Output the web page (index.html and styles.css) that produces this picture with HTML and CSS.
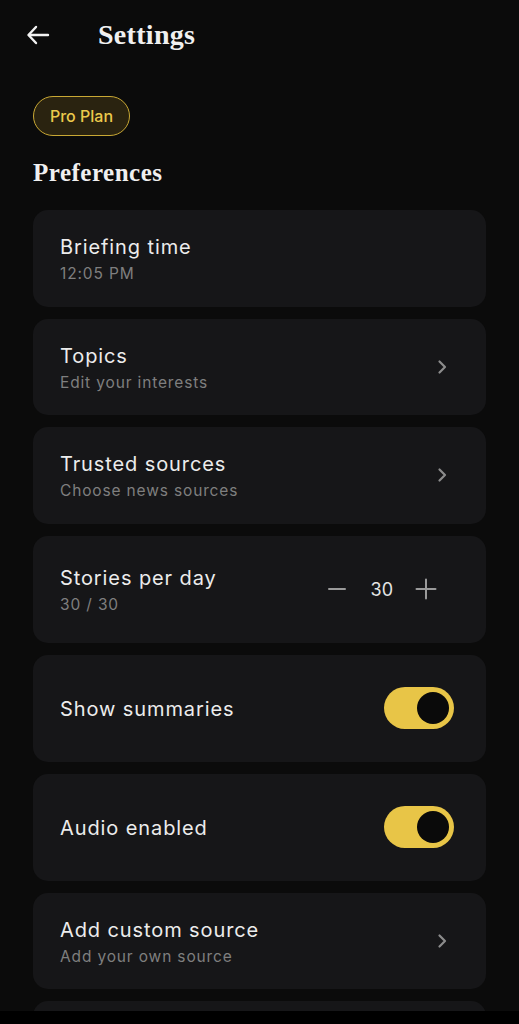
FILE: index.html
```html
<!DOCTYPE html>
<html lang="en">
<head>
<meta charset="utf-8">
<title>Settings</title>
<link rel="stylesheet" href="styles.css">
</head>
<body>
<div class="app">
  <header class="header">
    <svg class="back" width="24" height="20" viewBox="0 0 24 20" fill="none" stroke="#f2f2f2" stroke-width="2.4" stroke-linecap="round" stroke-linejoin="round">
      <path d="M22 10H3"/>
      <path d="M10 2L2.5 10L10 18"/>
    </svg>
    <h1 class="title">Settings</h1>
  </header>
  <main class="content">
    <div class="pill">Pro Plan</div>
    <h2 class="section">Preferences</h2>
    <div class="list">
      <div class="card">
        <div class="text">
          <div class="label">Briefing time</div>
          <div class="sub">12:05 PM</div>
        </div>
      </div>
      <div class="card">
        <div class="text">
          <div class="label">Topics</div>
          <div class="sub">Edit your interests</div>
        </div>
        <svg class="chev" width="10" height="16" viewBox="0 0 10 16" fill="none" stroke="#8c8c8c" stroke-width="2.2" stroke-linecap="round" stroke-linejoin="round"><path d="M2.5 2.5L8 8L2.5 13.5"/></svg>
      </div>
      <div class="card">
        <div class="text">
          <div class="label">Trusted sources</div>
          <div class="sub">Choose news sources</div>
        </div>
        <svg class="chev" width="10" height="16" viewBox="0 0 10 16" fill="none" stroke="#8c8c8c" stroke-width="2.2" stroke-linecap="round" stroke-linejoin="round"><path d="M2.5 2.5L8 8L2.5 13.5"/></svg>
      </div>
      <div class="card tall">
        <div class="text">
          <div class="label">Stories per day</div>
          <div class="sub">30 / 30</div>
        </div>
        <div class="stepper">
          <svg width="20" height="20" viewBox="0 0 20 20" stroke="#9a9a9a" stroke-width="2" stroke-linecap="round"><path d="M2 10H18"/></svg>
          <span class="count">30</span>
          <svg width="22" height="22" viewBox="0 0 22 22" stroke="#9a9a9a" stroke-width="2" stroke-linecap="round"><path d="M1.5 11H20.5M11 1.5V20.5"/></svg>
        </div>
      </div>
      <div class="card tall">
        <div class="label">Show summaries</div>
        <div class="toggle"><span class="knob"></span></div>
      </div>
      <div class="card tall">
        <div class="label">Audio enabled</div>
        <div class="toggle"><span class="knob"></span></div>
      </div>
      <div class="card">
        <div class="text">
          <div class="label">Add custom source</div>
          <div class="sub">Add your own source</div>
        </div>
        <svg class="chev" width="10" height="16" viewBox="0 0 10 16" fill="none" stroke="#8c8c8c" stroke-width="2.2" stroke-linecap="round" stroke-linejoin="round"><path d="M2.5 2.5L8 8L2.5 13.5"/></svg>
      </div>
      <div class="card"></div>
    </div>
  </main>
</div>
<div class="navbar"></div>
</body>
</html>
```
FILE: styles.css
```css
html, body {
  margin: 0;
  padding: 0;
  background: #0b0b0b;
  height: 1024px;
  overflow: hidden;
}
body {
  font-family: "Inter", "DejaVu Sans", sans-serif;
  color: #ececec;
}
.app {
  width: 519px;
}
.header {
  height: 70px;
  display: flex;
  align-items: center;
  padding-left: 26px;
}
.back {
  display: block;
}
.title {
  margin: 0 0 0 48px;
  font-family: "Liberation Serif", "DejaVu Serif", serif;
  font-weight: 700;
  font-size: 28px;
  letter-spacing: 0.3px;
  color: #f0f0f0;
}
.content {
  padding: 0 33px;
}
.pill {
  margin-top: 26px;
  width: 97px;
  height: 40px;
  box-sizing: border-box;
  border: 1.5px solid #c9a834;
  border-radius: 20px;
  background: #2a2310;
  color: #ecca4c;
  font-size: 16px;
  font-weight: 500;
  display: flex;
  align-items: center;
  justify-content: center;
}
.section {
  margin: 0;
  height: 74px;
  display: flex;
  align-items: center;
  font-family: "Liberation Serif", "DejaVu Serif", serif;
  font-weight: 700;
  font-size: 25px;
  letter-spacing: 0.5px;
  color: #f0f0f0;
}
.list {
  display: flex;
  flex-direction: column;
  gap: 12px;
}
.card {
  height: 96.5px;
  box-sizing: border-box;
  background: #161618;
  border-radius: 15px;
  padding: 0 32px 0 27px;
  display: flex;
  align-items: center;
  justify-content: space-between;
  flex-shrink: 0;
}
.card.tall {
  height: 107px;
}
.text, .card > .label {
  padding-top: 2px;
}
.label {
  font-size: 20px;
  line-height: 26px;
  letter-spacing: 0.9px;
  color: #ececec;
}
.sub {
  margin-top: 4px;
  font-size: 15.5px;
  line-height: 20px;
  letter-spacing: 0.85px;
  color: #7f7f7f;
}
.chev {
  margin-right: 7px;
}
.stepper {
  display: flex;
  align-items: center;
  margin-right: 17px;
}
.count {
  margin: 0 22px 0 24px;
  font-size: 18px;
  color: #e4e4e4;
}
.toggle {
  width: 70px;
  height: 42px;
  border-radius: 21px;
  background: #e8c547;
  display: flex;
  align-items: center;
  justify-content: flex-end;
  padding-right: 5px;
  box-sizing: border-box;
}
.knob {
  width: 32px;
  height: 32px;
  border-radius: 50%;
  background: #0a0a0a;
}
.navbar {
  position: fixed;
  left: 0;
  right: 0;
  bottom: 0;
  height: 13px;
  background: #000;
}
```
